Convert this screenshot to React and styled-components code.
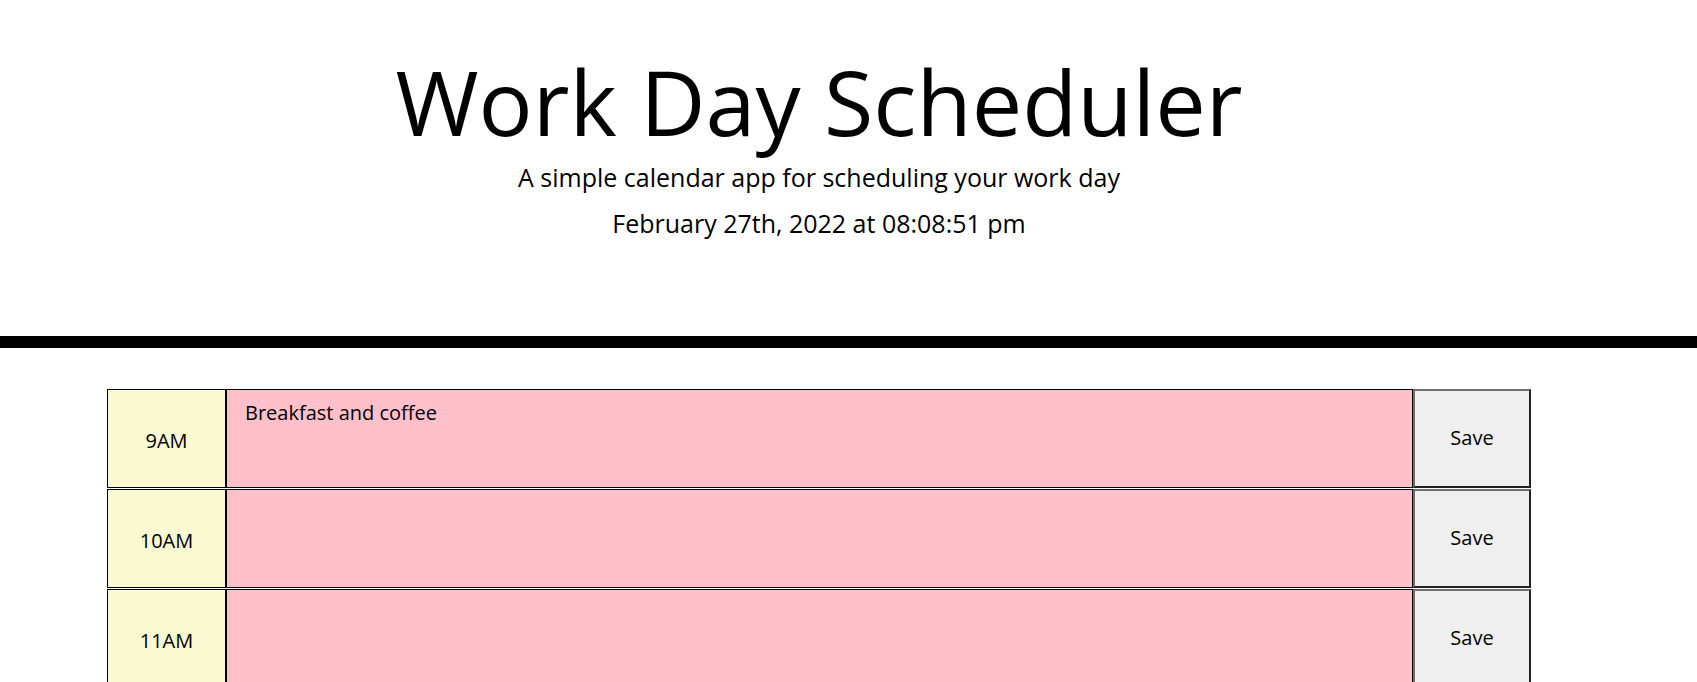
import React from 'react';
import styled, { createGlobalStyle } from 'styled-components';

// Global reset
const GlobalStyle = createGlobalStyle`
    body {
        margin: 0;
        background: #fff;
        font-family: "Open Sans", "Liberation Sans", sans-serif;
        color: #000;
    }
`;

// Styled Components
const Header = styled.header`
    text-align: center;
    padding: 47px 59px 94px 0;
    border-bottom: 12px solid #000;
`;

const Title = styled.h1`
    margin: 0;
    font-size: 90px;
    font-weight: 400;
    line-height: 1.2;
`;

const Lead = styled.p`
    margin: ${props => props.$gap}px 0 0;
    font-size: 25px;
    line-height: 1.5;
`;

const Planner = styled.main`
    padding: 41px 0 0 107px;
`;

const Row = styled.div`
    display: flex;
    width: 1424px;
    height: 99px;
    margin-bottom: 1px;
`;

const Hour = styled.div`
    box-sizing: border-box;
    width: 119px;
    display: flex;
    align-items: center;
    justify-content: center;
    padding-top: 3px;
    background: #fafad2;
    border: 1px solid #000;
    font-size: 20px;
`;

const Note = styled.textarea`
    box-sizing: border-box;
    width: 1187px;
    height: 100%;
    margin: 0;
    padding: 8px 18px 7px;
    background: #ffc0cb;
    border: 1px solid #000;
    font-family: "Open Sans", "Liberation Sans", sans-serif;
    font-size: 20px;
    line-height: 1.5;
    color: #000;
    resize: none;
    outline: none;
`;

const SaveButton = styled.button`
    box-sizing: border-box;
    width: 118px;
    height: 100%;
    margin: 0;
    padding: 0 0 2px;
    background: #efefef;
    border-style: solid;
    border-width: 2px;
    border-color: #6f6f6f #222 #222 #6f6f6f;
    font-family: "Open Sans", "Liberation Sans", sans-serif;
    font-size: 20px;
    color: #000;
    cursor: pointer;
`;

const hours = [
    { label: '9AM', text: 'Breakfast and coffee' },
    { label: '10AM', text: '' },
    { label: '11AM', text: '' },
    { label: '12PM', text: '' },
    { label: '1PM', text: '' },
    { label: '2PM', text: '' },
    { label: '3PM', text: '' },
    { label: '4PM', text: '' },
    { label: '5PM', text: '' },
];

const App = () => {
    return (
        <>
            <GlobalStyle />
            <Header>
                <Title>Work Day Scheduler</Title>
                <Lead $gap={4}>A simple calendar app for scheduling your work day</Lead>
                <Lead $gap={8}>February 27th, 2022 at 08:08:51 pm</Lead>
            </Header>
            <Planner>
                {hours.map((hour) => (
                    <Row key={hour.label}>
                        <Hour>{hour.label}</Hour>
                        <Note defaultValue={hour.text} />
                        <SaveButton>Save</SaveButton>
                    </Row>
                ))}
            </Planner>
        </>
    );
}

export default App;
